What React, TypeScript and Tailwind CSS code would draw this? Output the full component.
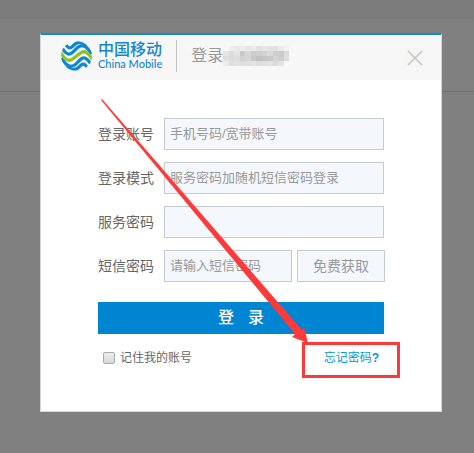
import React from "react";

const fields = [
  { id: "account", label: "登录账号", type: "text", placeholder: "手机号码/宽带账号" },
  { id: "mode", label: "登录模式", type: "text", placeholder: "服务密码加随机短信密码登录" },
  { id: "password", label: "服务密码", type: "password", placeholder: "" },
];

const inputClass =
  "h-8 min-w-0 rounded-none border border-[#c6cbd0] bg-[#f4f8fc] px-[5px] pb-0.5 text-[13px] text-[#666] placeholder:text-[#999] outline-none";

// shades of the pixelated product name, one row per line of blocks
const mosaic = [
  ["", "#efefef", "#e9e9e9", "#ededed", "#e8e8e8", "#ebebeb", "#e2e2e2", "#e6e6e6", "#e3e3e3", "#e1e1e1", "#ebebeb", "#f1f1f1"],
  ["#e5e5e5", "#dcdcdc", "#e4e4e4", "#c9c9c9", "#d7d7d7", "#cdcdcd", "#cfcfcf", "#d2d2d2", "#dadada", "#cccccc", "#cccccc", "#dcdcdc"],
  ["#dedede", "#dadada", "#dedede", "#d2d2d2", "#d5d5d5", "#c9c9c9", "#c2c2c2", "#c6c6c6", "#c8c8c8", "#d4d4d4", "#cfcfcf", "#dedede"],
  ["#ebebeb", "#dfdfdf", "#e2e2e2", "#dedede", "#dfdfdf", "#e3e3e3", "#dddddd", "#e0e0e0", "#e3e3e3", "#dadada", "#e4e4e4", ""],
];

function Waves() {
  return (
    <>
      <path d="M16 12C22 22 28 24 36 16C48 2 64 -2 80 14" />
      <path d="M4 22C14 38 25 46 36 35L50 21C66 6 80 16 95 40" />
    </>
  );
}

function Logo() {
  return (
    <svg viewBox="0 0 96 92" className="h-[30px] w-[31px] shrink-0" aria-hidden="true">
      <clipPath id="globe">
        <ellipse cx="48" cy="46" rx="48" ry="46" />
      </clipPath>
      <g clipPath="url(#globe)" fill="none" stroke="#0b87d3" strokeWidth="10">
        <Waves />
        <g transform="rotate(180 48 46)">
          <Waves />
        </g>
        <path d="M-2 34C10 54 22 66 36 55L60 37C74 26 86 38 98 58" stroke="#8fc31f" />
      </g>
    </svg>
  );
}

export default function App() {
  return (
    <div className="min-h-screen bg-[#808080] font-['Liberation_Sans','Noto_Sans_CJK_SC',sans-serif]">
      <div className="h-[19px] bg-[#7b7b7b]" />
      <div className="-mb-[59px] h-[73px] border-b border-[#707070]" />

      <main className="pr-8 pl-10">
        <section className="relative border border-t-2 border-[#d4d6d8] border-t-[#118bd6] bg-white">
          <header className="flex h-[45px] items-center bg-[#f7f7f7] pb-1 pl-5">
            <Logo />
            <div className="ml-1.5 text-[#1486cf]">
              <p className="text-base leading-4 font-medium">中国移动</p>
              <p className="font-[Lato] text-[11px] leading-3 font-medium">China Mobile</p>
            </div>
            <span className="mr-3.5 ml-3.5 h-8 w-px bg-[#c4c4c4]" />
            <h1 className="text-base leading-5 text-[#999]">登录</h1>
            <svg width="66" height="20" viewBox="0 0 12 4" preserveAspectRatio="none" shapeRendering="crispEdges" aria-hidden="true">
              {mosaic.map((row, y) =>
                row.map((shade, x) => shade && <rect key={`${x}-${y}`} x={x} y={y} width="1" height="1" fill={shade} />)
              )}
            </svg>
            <button type="button" aria-label="关闭" className="mt-1 mr-4 ml-auto flex size-5 items-center justify-center bg-[#f5f5f4]">
              <svg width="16" height="16" viewBox="0 0 16 16" stroke="#c6c6c6" strokeWidth="1.5" aria-hidden="true">
                <path d="M1 1L15 15M15 1L1 15" />
              </svg>
            </button>
          </header>

          <form className="pt-[38px] pr-14 pb-[43px] pl-[57px] text-[#666]">
            <div className="flex flex-col gap-3">
              {fields.map((field) => (
                <div key={field.id} className="flex items-center">
                  <label htmlFor={field.id} className="w-[66px] shrink-0 text-sm">
                    {field.label}
                  </label>
                  <input id={field.id} type={field.type} placeholder={field.placeholder} className={`${inputClass} mr-px flex-1`} />
                </div>
              ))}
              <div className="flex items-center">
                <label htmlFor="sms" className="w-[66px] shrink-0 text-sm">
                  短信密码
                </label>
                <input id="sms" type="text" placeholder="请输入短信密码" className={`${inputClass} flex-1`} />
                <button type="button" className="ml-[5px] h-8 w-[88px] border border-[#c6cbd0] bg-[#f4f8fc] text-sm text-[#999]">
                  免费获取
                </button>
              </div>
            </div>

            <div className="mt-5 mr-px">
              <button type="submit" className="flex h-8 w-full items-center justify-center gap-3.5 bg-[#0085d2] text-base font-medium text-white">
                <span>登</span>
                <span>录</span>
              </button>
            </div>

            <div className="mt-3.5 flex h-5 items-center justify-between pr-1.5 pl-[5px] text-xs">
              <label className="flex items-center gap-[5px]">
                <input
                  type="checkbox"
                  className="size-3 appearance-none rounded-xs border border-[#aaa] bg-linear-to-b from-[#eee] to-[#d8d8d8] checked:bg-[#0085d2]"
                />
                记住我的账号
              </label>
              <a href="#forgot" className="relative text-[#0099cc]">
                忘记密码<b>?</b>
                <span className="absolute -top-2 -right-[21px] h-9 w-[98px] border-3 border-[#fc3a3a]" />
              </a>
            </div>
          </form>

          <svg className="pointer-events-none absolute top-16 left-[60px]" width="210" height="246" viewBox="0 0 210 246" aria-hidden="true">
            <path d="M0 1L1 0L201 231L203 228L207 244L191 238L194 235Z" fill="#fc3a3a" />
          </svg>
        </section>
      </main>
    </div>
  );
}
